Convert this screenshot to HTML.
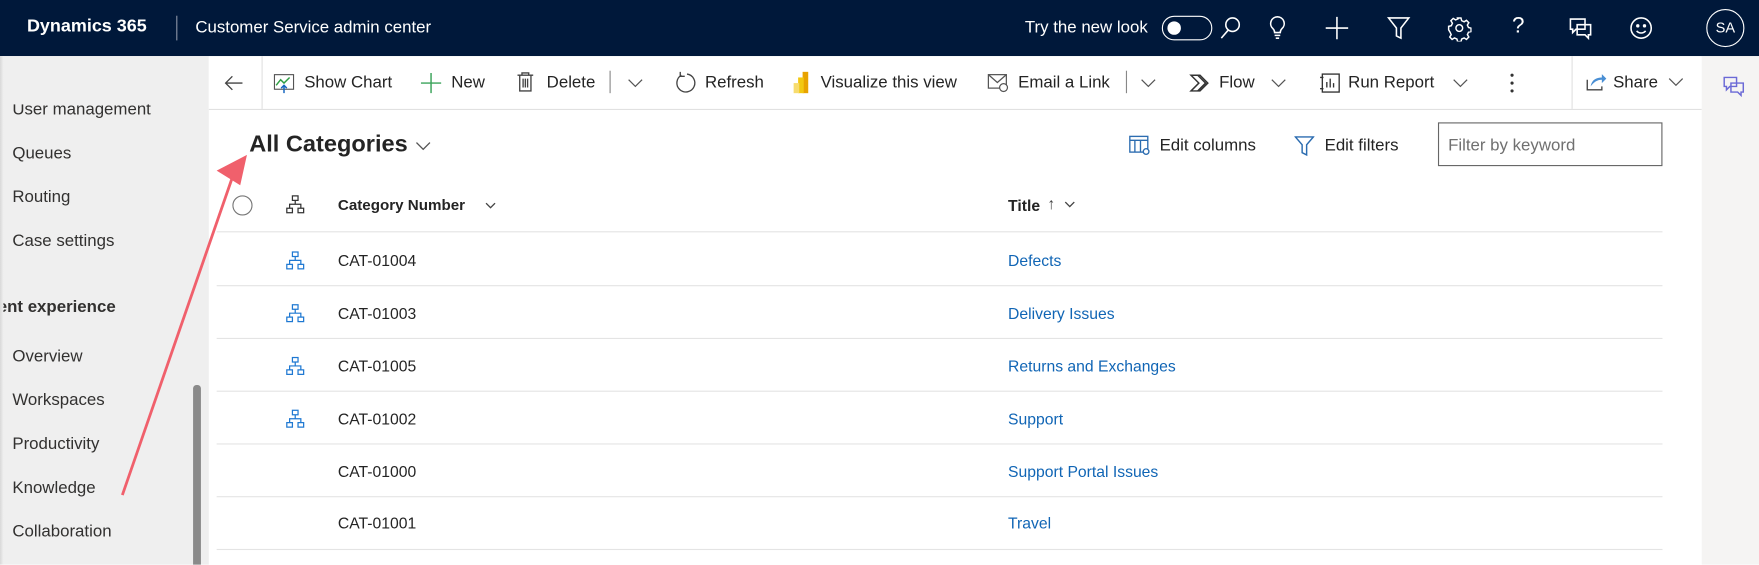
<!DOCTYPE html>
<html><head><meta charset="utf-8"><style>
*{margin:0;padding:0;box-sizing:border-box}
html,body{width:1759px;height:564px;overflow:hidden;background:#fff;font-family:"Liberation Sans",sans-serif;color:#242424}
#w{position:absolute;left:0;top:0;width:1567px;height:503px;transform:scale(1.12253);transform-origin:0 0}
.a{position:absolute;white-space:nowrap}
.top{position:absolute;left:0;top:0;width:1567px;height:50px;background:#00183a;color:#fff}
.side{position:absolute;left:0;top:50px;width:186px;height:453px;background:#efefef;overflow:hidden}
.side .a{font-size:15px;color:#323130}
.cmd{position:absolute;left:186px;top:50px;width:1330px;height:48px;background:#fff;border-bottom:1px solid #e1e1e1}
.cmd .a,.c{font-size:15px;color:#242424}
.rp{position:absolute;left:1516px;top:50px;width:51px;height:453px;background:#f5f4f3}
.ln{position:absolute;left:193px;width:1288px;height:1px;background:#e4e4e4}
.r{font-size:14px;color:#242424}
.lk{font-size:14px;color:#1065b5}
svg{position:absolute}
</style></head><body><div id="w">
<div class="top">
<div class="a" style="left:24px;top:15px;font-size:16px;font-weight:bold">Dynamics 365</div>
<div style="position:absolute;left:157px;top:14px;width:1px;height:22px;background:#8a93a5"></div>
<div class="a" style="left:174px;top:16px;font-size:15px">Customer Service admin center</div>
<div class="a" style="left:913px;top:16px;font-size:15px">Try the new look</div>
<div style="position:absolute;left:1035px;top:14px;width:45px;height:22px;border:1.5px solid #fff;border-radius:11px"></div>
<div style="position:absolute;left:1040px;top:19px;width:12px;height:12px;border-radius:50%;background:#fff"></div>
<svg style="left:1084px;top:12px" width="24" height="26" viewBox="0 0 24 26" fill="none" stroke="#fff" stroke-width="1.4"><circle cx="14" cy="10" r="6"/><path d="M10 15L4 22"/></svg>
<svg style="left:1128px;top:12px" width="20" height="26" viewBox="0 0 20 26" fill="none" stroke="#fff" stroke-width="1.4"><path d="M10 3a6 6 0 0 0-4 10.5c1 1 1.5 2 1.5 3.5h5c0-1.5.5-2.5 1.5-3.5A6 6 0 0 0 10 3zM7.5 19.5h5M8.5 22h3"/></svg>
<svg style="left:1180px;top:13px" width="22" height="24" viewBox="0 0 22 24" fill="none" stroke="#fff" stroke-width="1.4"><path d="M11 2v20M1 12h20"/></svg>
<svg style="left:1235px;top:13px" width="22" height="24" viewBox="0 0 22 24" fill="none" stroke="#fff" stroke-width="1.4"><path d="M2 3h18l-7 9v9l-4-2v-7z"/></svg>
<svg style="left:1289px;top:13px" width="22" height="24" viewBox="0 0 22 24" fill="none" stroke="#fff" stroke-width="1.3"><circle cx="11" cy="12" r="3"/><path d="M9.5 3h3l.6 2.4 2.2 1 2.1-1.3 2.1 2.1-1.3 2.1 1 2.2 2.3.6v3l-2.3.6-1 2.2 1.3 2.1-2.1 2.1-2.1-1.3-2.2 1-.6 2.3h-3l-.6-2.3-2.2-1-2.1 1.3-2.1-2.1 1.3-2.1-1-2.2L1.5 13.5v-3l2.4-.6 1-2.2L3.5 5.5l2.1-2.1 2.1 1.3 2.2-1z"/></svg>
<div class="a" style="left:1347px;top:12px;font-size:20px">?</div>
<svg style="left:1396px;top:13px" width="24" height="24" viewBox="0 0 24 24" fill="none" stroke="#fff" stroke-width="1.4"><path d="M3 4h13v9H8l-3 3v-3H3zM9 9h12v9h-2v3l-3-3H9z"/></svg>
<svg style="left:1450px;top:13px" width="24" height="24" viewBox="0 0 24 24" fill="none" stroke="#fff" stroke-width="1.4"><circle cx="12" cy="12" r="9"/><circle cx="9" cy="10" r=".8" fill="#fff"/><circle cx="15" cy="10" r=".8" fill="#fff"/><path d="M8 14.5c2 2.5 6 2.5 8 0"/></svg>
<div style="position:absolute;left:1520px;top:8px;width:34px;height:34px;border:1.3px solid #fff;border-radius:50%;font-size:13px;text-align:center;line-height:31px">SA</div>
</div>
<div class="side">
<div class="a" style="left:11px;top:39px">User management</div>
<div style="position:absolute;left:0;top:0;width:186px;height:43px;background:#efefef"></div>
<div class="a" style="left:11px;top:78px">Queues</div>
<div class="a" style="left:11px;top:117px">Routing</div>
<div class="a" style="left:11px;top:156px">Case settings</div>
<div class="a" style="left:-2px;top:215px;font-weight:bold">ent experience</div>
<div class="a" style="left:11px;top:259px">Overview</div>
<div class="a" style="left:11px;top:298px">Workspaces</div>
<div class="a" style="left:11px;top:337px">Productivity</div>
<div class="a" style="left:11px;top:376px">Knowledge</div>
<div class="a" style="left:11px;top:415px">Collaboration</div>
<div style="position:absolute;left:172px;top:293px;width:7px;height:170px;border-radius:3px;background:#8a8a8a"></div>
<div style="position:absolute;left:0;top:0;width:3px;height:453px;background:linear-gradient(90deg,#d8d8d8,#efefef)"></div>
</div>
<div class="cmd">
<svg style="left:12px;top:14px" width="20" height="20" viewBox="0 0 20 20" fill="none" stroke="#444" stroke-width="1.2"><path d="M18 10H3M9 4l-6 6 6 6"/></svg>
<div style="position:absolute;left:47px;top:0;width:1px;height:47px;background:#e1e1e1"></div>
<svg style="left:57px;top:14px" width="20" height="20" viewBox="0 0 20 20" fill="none"><rect x="1.5" y="2.5" width="17" height="13" stroke="#555"/><path d="M3 12l4-5 3 3 5-5" stroke="#2f9e44" stroke-width="1.3"/><path d="M10 19v-7M7.5 14.5L10 12l2.5 2.5" stroke="#1565c0" stroke-width="1.3"/></svg>
<div class="a" style="left:85px;top:15px">Show Chart</div>
<svg style="left:188px;top:14px" width="20" height="20" viewBox="0 0 20 20" stroke="#3aa35a" stroke-width="1.3"><path d="M10 1v18M1 10h18"/></svg>
<div class="a" style="left:216px;top:15px">New</div>
<svg style="left:273px;top:13px" width="18" height="20" viewBox="0 0 18 20" fill="none" stroke="#444" stroke-width="1.2"><path d="M2 4h14M6 4V2h6v2M4 4v14h10V4M7 7v8M9 7v8M11 7v8"/></svg>
<div class="a" style="left:301px;top:15px">Delete</div>
<div style="position:absolute;left:357px;top:13px;width:1px;height:20px;background:#888"></div>
<svg style="left:373px;top:20px" width="14" height="8" viewBox="0 0 14 8" fill="none" stroke="#555" stroke-width="1.1"><path d="M1 1l6 6 6-6"/></svg>
<svg style="left:414px;top:13px" width="22" height="22" viewBox="0 0 22 22" fill="none" stroke="#444" stroke-width="1.2"><path d="M7 4A8 8 0 1 0 12 3M6 1v4h4"/></svg>
<div class="a" style="left:442px;top:15px">Refresh</div>
<svg style="left:520px;top:13px" width="16" height="22"><rect x="9" y="1" width="5" height="19" fill="#e8a300"/><rect x="5" y="6" width="5" height="14" fill="#f2c811"/><rect x="1" y="11" width="5" height="9" fill="#f7dc6f"/></svg>
<div class="a" style="left:545px;top:15px">Visualize this view</div>
<svg style="left:693px;top:14px" width="22" height="20" viewBox="0 0 22 20" fill="none" stroke="#555" stroke-width="1.1"><rect x="1.5" y="2.5" width="16" height="12"/><path d="M1.5 2.5l8 7 8-7"/><circle cx="15" cy="14" r="3.5" fill="#fff"/></svg>
<div class="a" style="left:721px;top:15px">Email a Link</div>
<div style="position:absolute;left:817px;top:13px;width:1px;height:20px;background:#888"></div>
<svg style="left:830px;top:20px" width="14" height="8" viewBox="0 0 14 8" fill="none" stroke="#555" stroke-width="1.1"><path d="M1 1l6 6 6-6"/></svg>
<svg style="left:873px;top:14px" width="22" height="20" viewBox="0 0 22 20" fill="none" stroke="#333" stroke-width="1.3"><path d="M2 3h8l7 7-7 7H2l7-7zM8 3l7 7-7 7"/></svg>
<div class="a" style="left:900px;top:15px">Flow</div>
<svg style="left:946px;top:20px" width="14" height="8" viewBox="0 0 14 8" fill="none" stroke="#555" stroke-width="1.1"><path d="M1 1l6 6 6-6"/></svg>
<svg style="left:989px;top:14px" width="20" height="20" viewBox="0 0 20 20" fill="none" stroke="#333" stroke-width="1.2"><rect x="3" y="2" width="15" height="16"/><path d="M7 14V9M10 14V6M13 14v-4M1 5h3M1 15h3"/></svg>
<div class="a" style="left:1015px;top:15px">Run Report</div>
<svg style="left:1108px;top:20px" width="14" height="8" viewBox="0 0 14 8" fill="none" stroke="#555" stroke-width="1.1"><path d="M1 1l6 6 6-6"/></svg>
<svg style="left:1158px;top:14px" width="6" height="20"><circle cx="3" cy="3" r="1.4" fill="#333"/><circle cx="3" cy="10" r="1.4" fill="#333"/><circle cx="3" cy="17" r="1.4" fill="#333"/></svg>
<div style="position:absolute;left:1214px;top:0;width:1px;height:47px;background:#e1e1e1"></div>
<svg style="left:1226px;top:13px" width="20" height="20" viewBox="0 0 20 20" fill="none"><path d="M2 8v9h13v-3" stroke="#444" stroke-width="1.2"/><path d="M5 14c1-6 5-8 10-8V3l4 4-4 4V8c-4 0-7 2-10 6z" fill="#4a8fd4"/></svg>
<div class="a" style="left:1251px;top:15px">Share</div>
<svg style="left:1300px;top:19px" width="14" height="8" viewBox="0 0 14 8" fill="none" stroke="#555" stroke-width="1.1"><path d="M1 1l6 6 6-6"/></svg>
</div>
<div class="rp"><svg style="left:18px;top:17px" width="22" height="20" viewBox="0 0 22 20" fill="none" stroke="#6b69d6" stroke-width="1.3"><path d="M2 2h11v8H7l-3 3v-3H2zM8 7h11v8h-2v3l-3-3H8z"/></svg></div>
<div class="a" style="left:222px;top:117px;font-size:21px;font-weight:bold;color:#242424">All Categories</div>
<svg style="left:370px;top:126px" width="14" height="8" viewBox="0 0 14 8" fill="none" stroke="#555" stroke-width="1.2"><path d="M1 1l6 6 6-6"/></svg>
<svg style="left:1005px;top:119px" width="20" height="20" viewBox="0 0 20 20" fill="none" stroke="#2b6cb0" stroke-width="1.2"><rect x="1.5" y="2.5" width="16" height="14"/><path d="M1.5 6h16M6 6v10M11 6v10"/><circle cx="16" cy="16" r="2.5" fill="#fff"/></svg>
<div class="a c" style="left:1033px;top:121px;font-size:15px">Edit columns</div>
<svg style="left:1153px;top:120px" width="18" height="20" viewBox="0 0 18 20" fill="none" stroke="#2b6cb0" stroke-width="1.3"><path d="M1 2h16l-6 7v9l-4-2V9z"/></svg>
<div class="a c" style="left:1180px;top:121px;font-size:15px">Edit filters</div>
<div style="position:absolute;left:1281px;top:109px;width:200px;height:39px;border:1px solid #666"></div>
<div class="a" style="left:1290px;top:121px;font-size:15px;color:#707070">Filter by keyword</div>
<svg style="left:206px;top:173px" width="20" height="20"><circle cx="10" cy="10" r="8.5" fill="none" stroke="#777"/></svg>
<svg style="left:254px;top:173px" width="18" height="18" viewBox="0 0 18 18" fill="none" stroke="#333" stroke-width="1.1"><rect x="6.5" y="1.5" width="5" height="4"/><rect x="1.5" y="12.5" width="5" height="4"/><rect x="11.5" y="12.5" width="5" height="4"/><path d="M9 5.5V9M4 12.5V9h10v3.5"/></svg>
<div class="a r" style="left:301px;top:175px;font-weight:bold;font-size:13.5px">Category Number</div>
<svg style="left:432px;top:180px" width="10" height="6" viewBox="0 0 10 6" fill="none" stroke="#444" stroke-width="1.2"><path d="M1 1l4 4 4-4"/></svg>
<div class="a r" style="left:898px;top:175px;font-weight:bold">Title</div>
<div class="a" style="left:933px;top:173px;font-size:14px;color:#444">&#8593;</div>
<svg style="left:948px;top:179px" width="10" height="6" viewBox="0 0 10 6" fill="none" stroke="#444" stroke-width="1.2"><path d="M1 1l4 4 4-4"/></svg>
<div class="ln" style="top:206px"></div>
<div class="ln" style="top:254px"></div>
<div class="ln" style="top:301px"></div>
<div class="ln" style="top:348px"></div>
<div class="ln" style="top:395px"></div>
<div class="ln" style="top:442px"></div>
<div class="ln" style="top:489px"></div>
<svg style="left:254px;top:223px" width="18" height="18" viewBox="0 0 18 18" fill="none" stroke="#1e78d2" stroke-width="1.1"><rect x="6.5" y="1.5" width="5" height="4"/><rect x="1.5" y="12.5" width="5" height="4"/><rect x="11.5" y="12.5" width="5" height="4"/><path d="M9 5.5V9M4 12.5V9h10v3.5"/></svg>
<svg style="left:254px;top:270px" width="18" height="18" viewBox="0 0 18 18" fill="none" stroke="#1e78d2" stroke-width="1.1"><rect x="6.5" y="1.5" width="5" height="4"/><rect x="1.5" y="12.5" width="5" height="4"/><rect x="11.5" y="12.5" width="5" height="4"/><path d="M9 5.5V9M4 12.5V9h10v3.5"/></svg>
<svg style="left:254px;top:317px" width="18" height="18" viewBox="0 0 18 18" fill="none" stroke="#1e78d2" stroke-width="1.1"><rect x="6.5" y="1.5" width="5" height="4"/><rect x="1.5" y="12.5" width="5" height="4"/><rect x="11.5" y="12.5" width="5" height="4"/><path d="M9 5.5V9M4 12.5V9h10v3.5"/></svg>
<svg style="left:254px;top:364px" width="18" height="18" viewBox="0 0 18 18" fill="none" stroke="#1e78d2" stroke-width="1.1"><rect x="6.5" y="1.5" width="5" height="4"/><rect x="1.5" y="12.5" width="5" height="4"/><rect x="11.5" y="12.5" width="5" height="4"/><path d="M9 5.5V9M4 12.5V9h10v3.5"/></svg>
<div class="a r" style="left:301px;top:224px">CAT-01004</div><div class="a lk" style="left:898px;top:224px">Defects</div>
<div class="a r" style="left:301px;top:271px">CAT-01003</div><div class="a lk" style="left:898px;top:271px">Delivery Issues</div>
<div class="a r" style="left:301px;top:318px">CAT-01005</div><div class="a lk" style="left:898px;top:318px">Returns and Exchanges</div>
<div class="a r" style="left:301px;top:365px">CAT-01002</div><div class="a lk" style="left:898px;top:365px">Support</div>
<div class="a r" style="left:301px;top:412px">CAT-01000</div><div class="a lk" style="left:898px;top:412px">Support Portal Issues</div>
<div class="a r" style="left:301px;top:458px">CAT-01001</div><div class="a lk" style="left:898px;top:458px">Travel</div>
<svg style="left:0;top:0" width="1567" height="503"><path d="M109 441L207 158" stroke="#f0606c" stroke-width="2.5" fill="none"/><path d="M220 138L193 152L214 165Z" fill="#f0606c"/></svg>
</div></body></html>
